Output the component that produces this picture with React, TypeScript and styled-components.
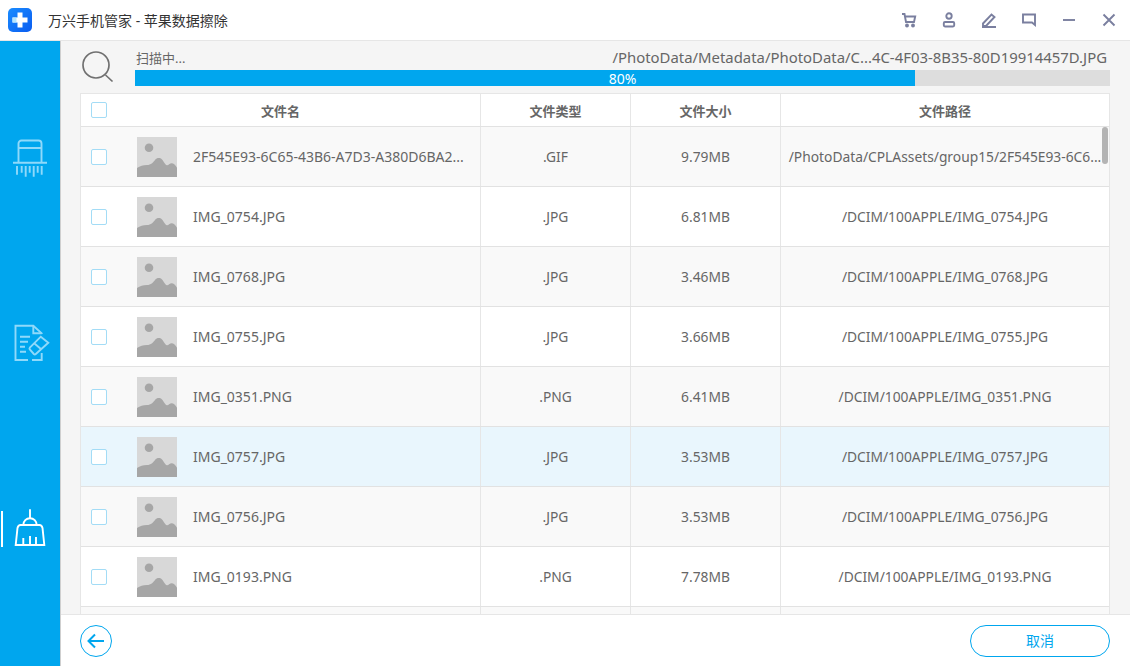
import React from "react";
import styled, { createGlobalStyle } from "styled-components";

const Global = createGlobalStyle`
  html, body { margin: 0; padding: 0; height: 100%; overflow: hidden; background: #fff; }
  #root { height: 100%; }
  * { box-sizing: border-box; }
`;

const FONT = `"Noto Sans", "Noto Sans CJK SC", sans-serif`;
const BLUE = "#00a6ee";

const Shell = styled.div`
  width: 1130px; height: 666px; display: flex; flex-direction: column;
  font-family: ${FONT}; color: #666; font-size: 13.8px;
`;
const TitleBar = styled.header`
  height: 41px; flex: none; display: flex; align-items: center;
  padding: 0 13px 1px 8px; background: #fff; border-bottom: 1px solid #e6e6e6;
`;
const Logo = styled.svg`width: 24px; height: 24px; flex: none;`;
const Title = styled.div`margin-left: 16px; font-size: 14px; color: #333; flex: 1; white-space: pre;`;
const Tools = styled.div`display: flex; align-items: center; gap: 24px;`;
const ToolIcon = styled.svg`
  width: 16px; height: 16px; flex: none; fill: none; stroke: #7a7f9f; stroke-width: 1.9;
`;
const Body = styled.div`flex: 1; min-height: 0; display: flex;`;
const Sidebar = styled.nav`
  width: 61px; flex: none; background: ${BLUE}; border-right: 1px solid #cfcfcf;
  display: flex; flex-direction: column; padding-top: 97px; gap: 144.5px;
`;
const NavItem = styled.div<{ $active?: boolean }>`
  position: relative; height: 40px; display: flex; align-items: center; justify-content: center;
  color: ${p => (p.$active ? "#fff" : "#8fd9fa")};
  &::before {
    content: ""; display: ${p => (p.$active ? "block" : "none")};
    position: absolute; left: 1px; top: 4px; width: 2px; height: 36px; background: #fff;
  }
`;
const NavIcon = styled.svg`width: 40px; height: 40px; flex: none; fill: none; stroke: currentColor; stroke-width: 1.9;`;
const Main = styled.main`flex: 1; min-width: 0; display: flex; flex-direction: column; background: #f5f5f5;`;
const ScanArea = styled.section`
  height: 52px; flex: none; display: flex; padding: 10px 20px 0 21px; gap: 21px;
`;
const SearchIcon = styled.svg`width: 32px; height: 32px; flex: none; fill: none; stroke: #707070; stroke-width: 1.7;`;
const ScanInfo = styled.div`flex: 1; min-width: 0; display: flex; flex-direction: column;`;
const ScanText = styled.div`
  height: 19px; display: flex; justify-content: space-between; align-items: center;
  line-height: 19px; color: #666; padding-right: 3px; margin: -2px 0 2px 1px;
`;
const ScanLabel = styled.span`font-size: 13px;`;
const ScanPath = styled.span`font-size: 14.9px; margin-bottom: 2px;`;
const Progress = styled.div`position: relative; height: 16px; background: #ddd;`;
const ProgressFill = styled.div`height: 100%; background: ${BLUE};`;
const ProgressLabel = styled.div`
  position: absolute; inset: 0; text-align: center; line-height: 17px; font-size: 14px; color: #fff;
`;
const Table = styled.section`
  position: relative; flex: 1; min-height: 0; margin: 0 20px 0 19px; overflow: hidden;
  background: #fff; border: 1px solid #e6e6e6; border-bottom: none;
`;
const Row = styled.div<{ $tone?: "odd" | "even" | "hi" }>`
  display: grid; grid-template-columns: 400px 150px 150px 1fr; height: 60px;
  border-bottom: 1px solid #e2e2e2;
  background: ${p => (p.$tone === "hi" ? "#e9f6fd" : p.$tone === "even" ? "#fff" : "#f9f9f9")};
`;
const HeadRow = styled(Row)`height: 33px; background: #fff;`;
const Cell = styled.div`
  display: flex; align-items: center; justify-content: center; min-width: 0;
  border-right: 1px solid #e6e6e6; white-space: nowrap;
  &:last-child { border-right: none; }
`;
const HeadCell = styled(Cell)`font-weight: 700; color: #666; font-size: 13px;`;
const HeadNameCell = styled(HeadCell)`justify-content: flex-start; padding-left: 10px;`;
const NameCell = styled(Cell)`justify-content: flex-start; padding-left: 10px;`;
const Check = styled.span`
  width: 16px; height: 16px; flex: none; border: 1px solid #a3dcf6; border-radius: 2px; background: #fff;
  margin-top: 1px;
`;
const HeadCheck = styled(Check)`margin: 0 0 1px;`;
const HeadLabel = styled.span`flex: 1; text-align: center; padding-right: 26px;`;
const Thumb = styled.svg`width: 40px; height: 40px; flex: none; margin-left: 30px; display: block; margin-top: 1px;`;
const FileName = styled.span`margin-left: 16px; font-size: 14px;`;
const Scrollbar = styled.div`
  position: absolute; right: 1px; top: 33px; width: 6px; height: 37px; border-radius: 3px; background: #b4b4b4;
`;
const Footer = styled.footer`
  height: 52px; flex: none; background: #fff; border-top: 1px solid #e6e6e6;
  display: flex; align-items: center; justify-content: space-between; padding: 0 20px 0 19px;
`;
const BackButton = styled.button`
  width: 32px; height: 32px; padding: 0; border: 1px solid ${BLUE}; border-radius: 50%;
  background: #fff; display: flex; align-items: center; justify-content: center;
`;
const CancelButton = styled.button`
  width: 140px; height: 32px; border: 1px solid ${BLUE}; border-radius: 16px; background: #fff;
  color: ${BLUE}; font: 14px ${FONT}; padding: 0 0 2px;
`;

const rows = [
  { n: "2F545E93-6C65-43B6-A7D3-A380D6BA2...", t: ".GIF", s: "9.79MB", p: "/PhotoData/CPLAssets/group15/2F545E93-6C6..." },
  { n: "IMG_0754.JPG", t: ".JPG", s: "6.81MB", p: "/DCIM/100APPLE/IMG_0754.JPG" },
  { n: "IMG_0768.JPG", t: ".JPG", s: "3.46MB", p: "/DCIM/100APPLE/IMG_0768.JPG" },
  { n: "IMG_0755.JPG", t: ".JPG", s: "3.66MB", p: "/DCIM/100APPLE/IMG_0755.JPG" },
  { n: "IMG_0351.PNG", t: ".PNG", s: "6.41MB", p: "/DCIM/100APPLE/IMG_0351.PNG" },
  { n: "IMG_0757.JPG", t: ".JPG", s: "3.53MB", p: "/DCIM/100APPLE/IMG_0757.JPG", hi: true },
  { n: "IMG_0756.JPG", t: ".JPG", s: "3.53MB", p: "/DCIM/100APPLE/IMG_0756.JPG" },
  { n: "IMG_0193.PNG", t: ".PNG", s: "7.78MB", p: "/DCIM/100APPLE/IMG_0193.PNG" },
  { n: "", t: "", s: "", p: "", blank: true },
];

const ThumbArt = () => (
  <Thumb viewBox="0 0 40 40">
    <rect width="40" height="40" fill="#d8d8d8" />
    <circle cx="12" cy="10.700" r="4.300" fill="#a6a6a6" />
    <path d="M0 31c3-2 6-3 10-3 4 0 6-2.500 8-5 2-2.500 5-2.500 7-.5 2 2 3 5.500 5 5.700 1.500.2 2.500-1.700 4-1.900 2.500-.3 4.500 2 6 4.400V40H0z" fill="#a6a6a6" />
  </Thumb>
);

export default function App() {
  return (
    <Shell>
      <Global />
      <TitleBar>
        <Logo viewBox="0 0 24 24">
          <defs>
            <linearGradient id="lg" x1="0" y1="0" x2="1" y2="1">
              <stop offset="0" stopColor="#1a8cff" />
              <stop offset="1" stopColor="#0a5cf0" />
            </linearGradient>
          </defs>
          <rect width="24" height="24" rx="5" fill="url(#lg)" />
          <path d="M9.500 4.500h5v5h5v5h-5v5h-5v-5h-5v-5h5z" fill="#fff" />
          <rect x="4.500" y="9.500" width="4" height="5" fill="#b5e6ff" />
        </Logo>
        <Title>万兴手机管家 - 苹果数据擦除</Title>
        <Tools>
          <ToolIcon viewBox="0 0 16 16">
            <path d="M1 2h2.500l1.500 8h8l1.200-5.500H4" />
            <circle cx="6" cy="13.500" r="1" />
            <circle cx="12" cy="13.500" r="1" />
          </ToolIcon>
          <ToolIcon viewBox="0 0 16 16">
            <circle cx="8" cy="4" r="2.700" />
            <rect x="2.800" y="10" width="10.400" height="4.500" rx="1.200" />
          </ToolIcon>
          <ToolIcon viewBox="0 0 16 16">
            <path d="M2 11.500 10.500 2.500l3 2.500L5 14H2zM1 15h14" />
          </ToolIcon>
          <ToolIcon viewBox="0 0 16 16">
            <path d="M2 2.500h12v10.500l-3-2.500H2z" />
          </ToolIcon>
          <ToolIcon viewBox="0 0 16 16">
            <path d="M2 8h12" />
          </ToolIcon>
          <ToolIcon viewBox="0 0 16 16">
            <path d="M2.500 2.500l11 11M13.500 2.500l-11 11" />
          </ToolIcon>
        </Tools>
      </TitleBar>
      <Body>
        <Sidebar>
          <NavItem>
            <NavIcon viewBox="0 0 40 40">
              <path d="M8.500 24.700V5.500a3 3 0 0 1 3-3h17a3 3 0 0 1 3 3v19.200M8.500 10h23" />
              <path d="M3 24.700h34" />
              <path d="M7 28v8.700M11.700 28v6.700M15.700 28v10.700M19.700 28v6.700M23.700 28v10.700M27.700 28v6.700M31.700 28v8.700" />
            </NavIcon>
          </NavItem>
          <NavItem>
            <NavIcon viewBox="0 0 40 40">
              <path d="M18 37H5.500V2.700h17.800l8.400 7.600V11M31.700 30v7H22" />
              <path d="M23.300 2.700v7.600h8.400" />
              <path d="M10 13.700h10M10 18.700h8M10 23.700h5M10 28.700h6" />
              <path d="m19.800 24.700 11-11 7.500 6L25.800 31a1.500 1.500 0 0 1-2 0l-4-4.500a1.500 1.500 0 0 1 0-1.800zM24.500 20.500l7 6" />
            </NavIcon>
          </NavItem>
          <NavItem $active>
            <NavIcon viewBox="0 0 40 40">
              <path d="M20 2.300v9" />
              <path d="M13.300 18c0-4 3-6.800 6.700-6.800s6.700 2.800 6.700 6.800" />
              <path d="M10.500 18h19c1.500 0 2.500 1 3 3l1.800 17H5.700l1.800-17c.5-2 1.500-3 3-3z" />
              <path d="M13.300 31v7M20 29v9M26 30v8" />
            </NavIcon>
          </NavItem>
        </Sidebar>
        <Main>
          <ScanArea>
            <SearchIcon viewBox="0 0 32 32">
              <circle cx="14" cy="14" r="13" />
              <path d="m23.500 24 7 6.500" />
            </SearchIcon>
            <ScanInfo>
              <ScanText>
                <ScanLabel>扫描中...</ScanLabel>
                <ScanPath>/PhotoData/Metadata/PhotoData/C...4C-4F03-8B35-80D19914457D.JPG</ScanPath>
              </ScanText>
              <Progress>
                <ProgressFill style={{ width: "80%" }} />
                <ProgressLabel>80%</ProgressLabel>
              </Progress>
            </ScanInfo>
          </ScanArea>
          <Table>
            <HeadRow>
              <HeadNameCell>
                <HeadCheck />
                <HeadLabel>文件名</HeadLabel>
              </HeadNameCell>
              <HeadCell>文件类型</HeadCell>
              <HeadCell>文件大小</HeadCell>
              <HeadCell>文件路径</HeadCell>
            </HeadRow>
            {rows.map((r, i) => (
              <Row key={i} $tone={r.hi ? "hi" : i % 2 === 0 ? "odd" : "even"}>
                {r.blank ? (
                  <>
                    <Cell /><Cell /><Cell /><Cell />
                  </>
                ) : (
                  <>
                    <NameCell>
                      <Check />
                      <ThumbArt />
                      <FileName>{r.n}</FileName>
                    </NameCell>
                    <Cell>{r.t}</Cell>
                    <Cell>{r.s}</Cell>
                    <Cell>{r.p}</Cell>
                  </>
                )}
              </Row>
            ))}
            <Scrollbar />
          </Table>
          <Footer>
            <BackButton aria-label="back">
              <svg width="20" height="16" viewBox="0 0 20 16" fill="none" stroke={BLUE} strokeWidth="2">
                <path d="M18 8H3M9 1.500 2.500 8 9 14.500" />
              </svg>
            </BackButton>
            <CancelButton>取消</CancelButton>
          </Footer>
        </Main>
      </Body>
    </Shell>
  );
}
